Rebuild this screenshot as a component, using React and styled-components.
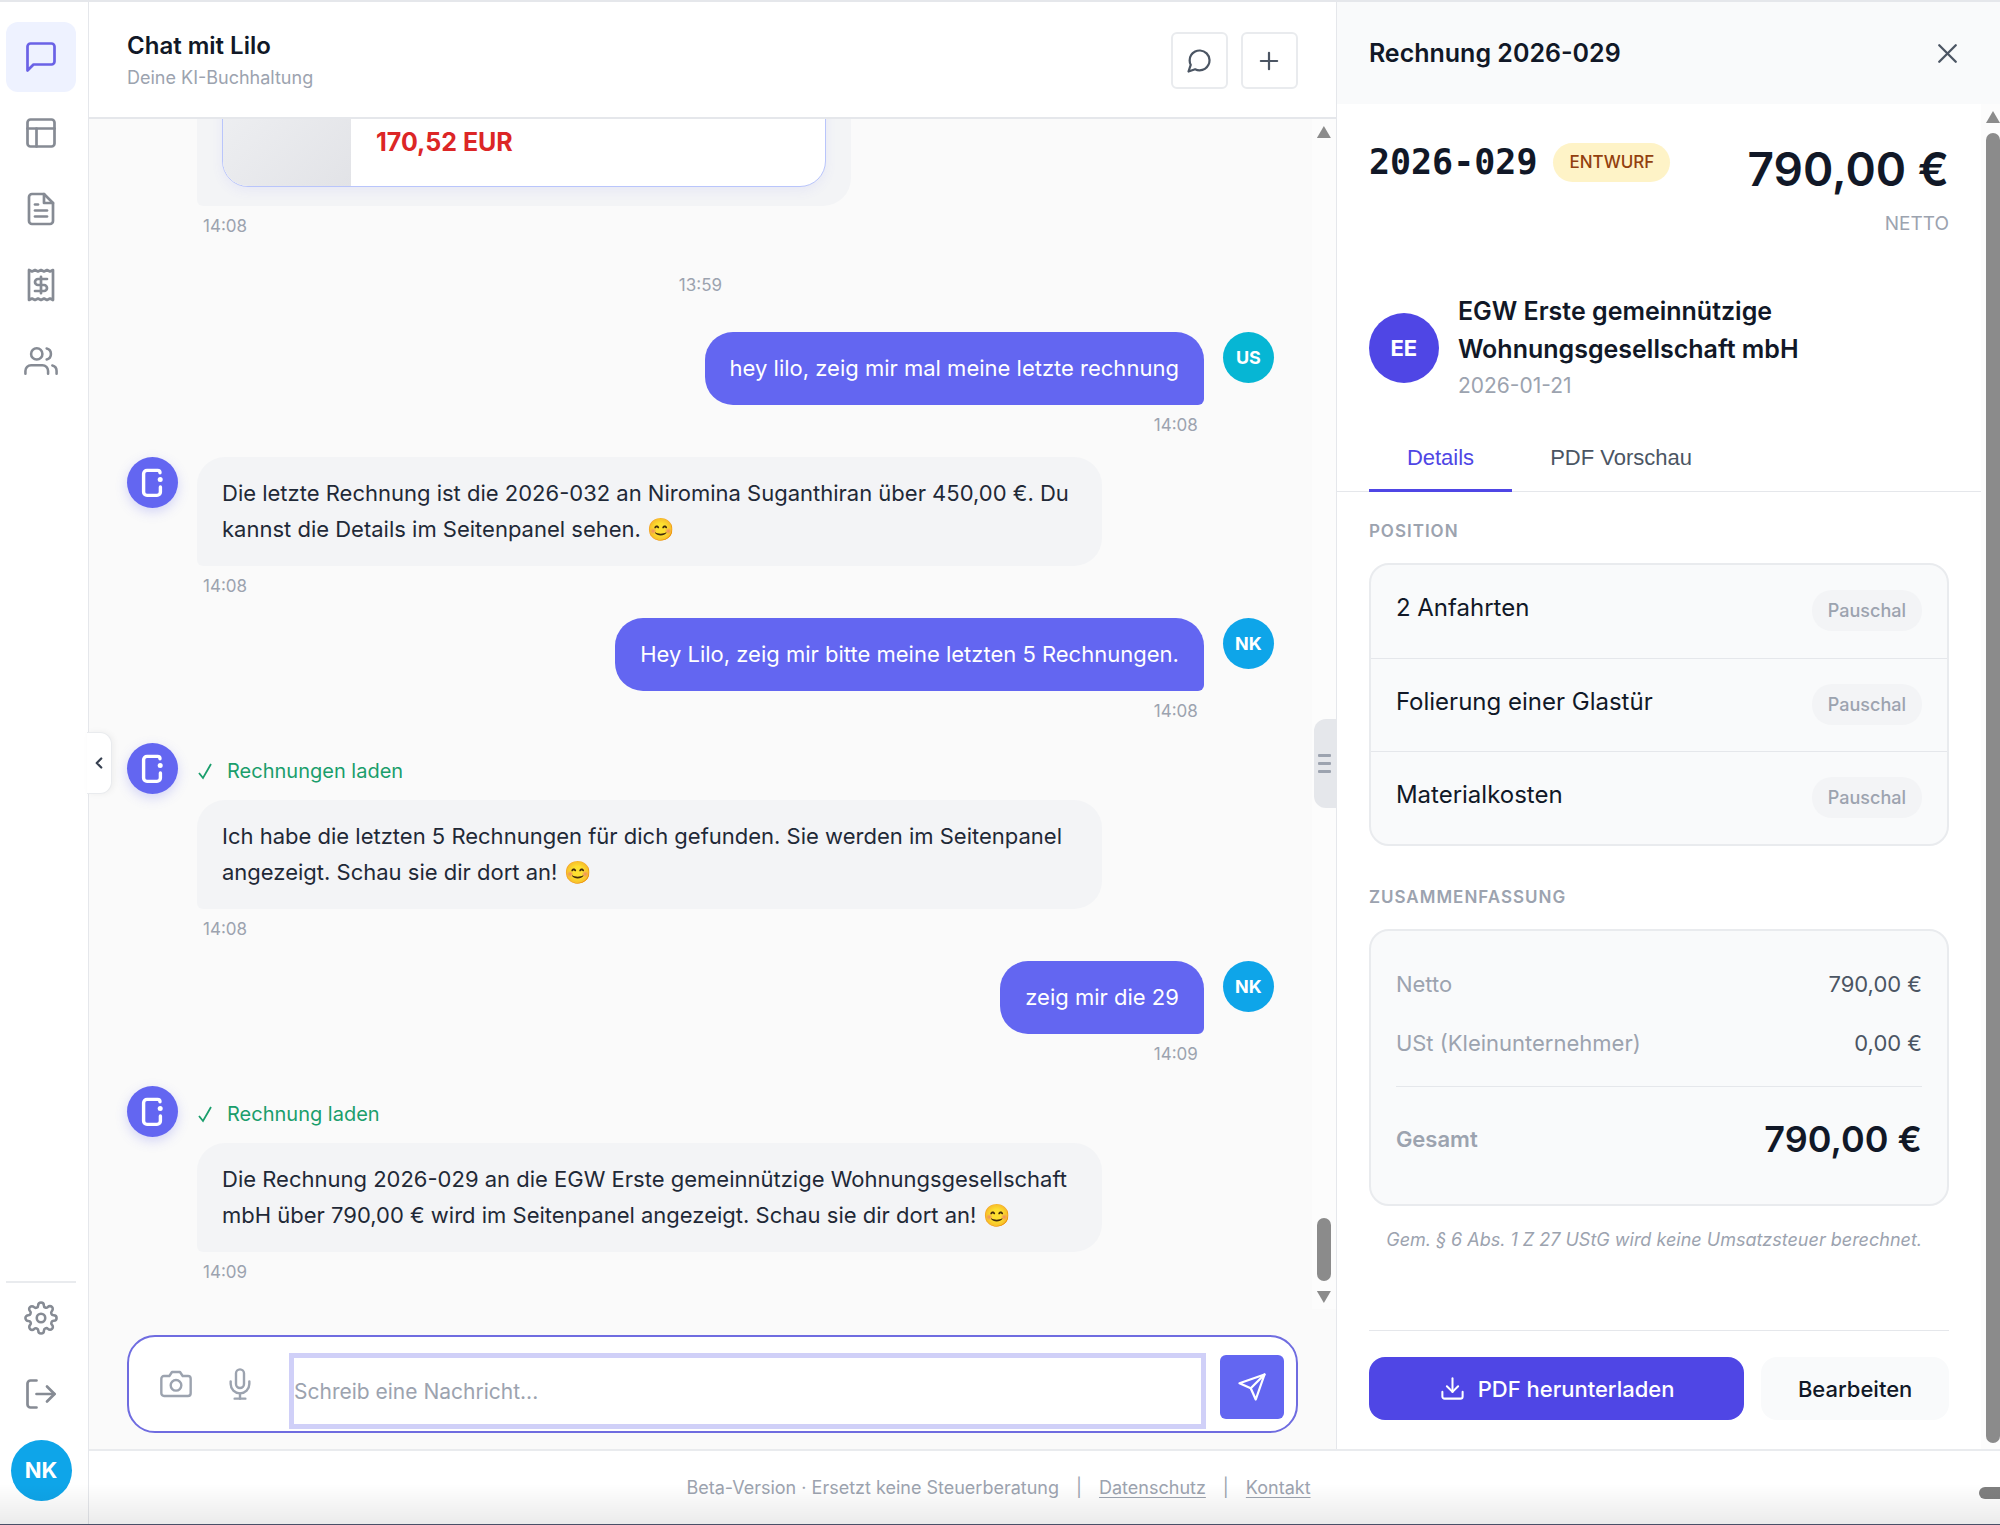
import React from 'react';
import styled, { createGlobalStyle, css } from 'styled-components';
import {
    FiCamera,
    FiChevronLeft,
    FiDownload,
    FiFileText,
    FiLayout,
    FiLogOut,
    FiMessageCircle,
    FiMessageSquare,
    FiMic,
    FiPlus,
    FiSend,
    FiSettings,
    FiUsers,
    FiX,
} from 'react-icons/fi';

const GlobalStyle = createGlobalStyle`
    *, *::before, *::after {
        box-sizing: border-box;
    }

    body {
        margin: 0;
        background: #ffffff;
        color: #111827;
        font-family: Inter, "Liberation Sans", sans-serif;
        font-size: 22px;
        line-height: 36px;
    }

    button, textarea {
        font: inherit;
        color: inherit;
    }

    button {
        padding: 0;
        border: 0;
        background: none;
        cursor: pointer;
    }

    h1, h2, h3, p, ul, dl, dd {
        margin: 0;
        padding: 0;
    }

    svg {
        display: block;
        flex: none;
    }
`

const Shell = styled.div`
    position: relative;
    display: flex;
    height: 100vh;
    border-top: 2px solid #e5e7eb;
    border-bottom: 1px solid #4a5068;

    &::after {
        content: '';
        position: absolute;
        left: 0;
        right: 0;
        bottom: 0;
        height: 40px;
        background: linear-gradient(rgba(0, 0, 0, 0), rgba(0, 0, 0, 0.08));
        pointer-events: none;
    }
`

/* ---------- sidebar ---------- */

const Sidebar = styled.nav`
    position: relative;
    display: flex;
    flex-direction: column;
    justify-content: space-between;
    flex: none;
    width: 89px;
    padding: 20px 12px 19px 6px;
    border-right: 1px solid #e5e7eb;
    background: #ffffff;
`

const NavGroup = styled.div`
    display: flex;
    flex-direction: column;
    align-items: center;
    gap: 6px;

    ${({ $divided }) => $divided && css`
        border-top: 2px solid #e9ebee;
    `}
`

const NavButton = styled.button`
    display: flex;
    align-items: center;
    justify-content: center;
    width: 70px;
    height: 70px;
    border-radius: 12px;
    color: ${({ $active }) => ($active ? '#6a62e6' : '#868b94')};
    background: ${({ $active }) => ($active ? '#eef2ff' : 'transparent')};
`

const CollapseTab = styled.button`
    position: absolute;
    top: 730px;
    left: 87px;
    z-index: 2;
    display: flex;
    align-items: center;
    justify-content: center;
    width: 25px;
    height: 62px;
    border: 1px solid #e9ebee;
    border-left: 0;
    border-radius: 0 12px 12px 0;
    background: #ffffff;
    color: #374151;
    box-shadow: 2px 0 6px rgba(0, 0, 0, 0.05);
`

const Avatar = styled.div`
    display: flex;
    align-items: center;
    justify-content: center;
    flex: none;
    width: ${({ $size }) => $size}px;
    height: ${({ $size }) => $size}px;
    border-radius: 50%;
    background: ${({ $color }) => $color};
    color: #ffffff;
    font-size: ${({ $size }) => ($size > 55 ? 22 : 18)}px;
    font-weight: 700;
`

/* ---------- page frame ---------- */

const Main = styled.div`
    display: flex;
    flex-direction: column;
    flex: 1;
    min-width: 0;
`

const Columns = styled.div`
    display: grid;
    grid-template-columns: minmax(0, 653fr) minmax(0, 347fr);
    grid-template-rows: minmax(0, 1fr);
    flex: 1;
    min-height: 0;
`

const Footer = styled.footer`
    position: relative;
    display: flex;
    align-items: center;
    justify-content: center;
    gap: 17px;
    flex: none;
    height: 75px;
    padding-right: 92px;
    border-top: 2px solid #e9ebee;
    color: #9ca3af;
    font-size: 18px;

    a {
        color: inherit;
        text-underline-offset: 3px;
    }
`

const FooterScroll = styled.div`
    position: absolute;
    right: 0;
    top: 36px;
    width: 21px;
    height: 12px;
    border-radius: 6px 0 0 6px;
    background: #7f7f7f;
`

/* ---------- scrollbar ---------- */

const Track = styled.div`
    display: flex;
    flex-direction: column;
    align-items: ${({ $wide }) => ($wide ? 'center' : 'flex-end')};
    justify-content: space-between;
    flex: none;
    width: ${({ $wide }) => ($wide ? 24 : 19)}px;
    padding: 7px 0 6px;
    background: #fcfcfc;
`

const Arrow = styled.div`
    width: 14px;
    height: 12px;
    background: #8b8b8b;
    clip-path: ${({ $down }) => ($down ? 'polygon(0 0, 100% 0, 50% 100%)' : 'polygon(50% 0, 100% 100%, 0 100%)')};
`

const Thumb = styled.div`
    width: 14px;
    height: 63px;
    border-radius: 7px;
    background: #8b8b8b;

    ${({ $fill }) => $fill && css`
        flex: 1;
        height: auto;
        margin-top: 10px;
    `}
`

const TrackEnd = styled.div`
    display: flex;
    flex-direction: column;
    gap: 10px;
`

/* ---------- chat ---------- */

const Chat = styled.section`
    position: relative;
    display: flex;
    flex-direction: column;
    min-width: 0;
    border-right: 1px solid #e5e7eb;
    background: #fafafa;
`

const ChatHeader = styled.header`
    display: flex;
    align-items: center;
    justify-content: space-between;
    flex: none;
    height: 117px;
    padding: 2px 38px 0;
    border-bottom: 2px solid #e5e7eb;
    background: #ffffff;
`

const ChatTitle = styled.h1`
    padding-top: 2px;
    font-size: 24px;
    font-weight: 600;
    line-height: 32px;
`

const ChatSubtitle = styled.p`
    color: #9ca3af;
    font-size: 18px;
    line-height: 32px;
`

const HeaderActions = styled.div`
    display: flex;
    gap: 13px;
`

const SquareButton = styled.button`
    display: flex;
    align-items: center;
    justify-content: center;
    width: 57px;
    height: 57px;
    border: 2px solid #e9ebee;
    border-radius: 6px;
    background: #ffffff;
    color: #4b5563;
`

const Scroller = styled.div`
    display: flex;
    flex: 1;
    min-height: 0;
`

const Messages = styled.div`
    display: flex;
    flex-direction: column;
    justify-content: flex-end;
    flex: 1;
    min-width: 0;
    padding: 0 38px 5px;
    overflow: hidden;
`

const Row = styled.div`
    display: flex;
    flex: none;
    gap: 19px;
    flex-direction: ${({ $own }) => ($own ? 'row-reverse' : 'row')};
`

const RowBody = styled.div`
    display: flex;
    flex-direction: column;
    flex: 1;
    min-width: 0;
    align-items: ${({ $own }) => ($own ? 'flex-end' : 'flex-start')};
    padding-left: ${({ $indent }) => ($indent ? 70 : 0)}px;
`

const Bubble = styled.div`
    max-width: 84%;
    padding: 18px 25px 19px;
    border-radius: 28px 28px 28px 6px;
    background: #f3f4f6;
    color: #1f2937;

    ${({ $own }) => $own && css`
        border-radius: 28px 28px 6px 28px;
        background: #6366f1;
        color: #ffffff;
    `}
`

const CardBubble = styled.div`
    width: 654px;
    max-width: 100%;
    padding: 19px 25px;
    border-radius: 28px 28px 28px 6px;
    background: #f3f4f6;
`

const ReceiptCard = styled.div`
    display: flex;
    height: 180px;
    overflow: hidden;
    border: 1px solid #b9c5fb;
    border-radius: 26px;
    background: #ffffff;
    box-shadow: 0 4px 12px rgba(99, 102, 241, 0.08);
`

const ReceiptThumb = styled.div`
    flex: none;
    width: 128px;
    background: linear-gradient(135deg, #f3f4f6, #e2e3e7);
`

const ReceiptAmount = styled.p`
    align-self: flex-end;
    padding: 0 25px 26px;
    color: #dc2626;
    font-size: 25px;
    font-weight: 700;
`

const Time = styled.time`
    margin: 7px 6px 19px;
    color: #9ca3af;
    font-size: 17px;
    line-height: 26px;
`

const TimeDivider = styled.div`
    flex: none;
    padding: 14px 0 34px;
    color: #9ca3af;
    font-size: 17px;
    line-height: 26px;
    text-align: center;
`

const BotAvatar = styled.div`
    flex: none;
    width: 51px;
    height: 51px;
    border-radius: 50%;
    background: #6366f1;
    box-shadow: 0 4px 12px rgba(99, 102, 241, 0.25);
`

const ToolLine = styled.p`
    display: flex;
    align-items: center;
    gap: 14px;
    padding: 10px 0 11px;
    color: #1a9e6c;
    font-size: 20px;
`

const Composer = styled.form`
    display: flex;
    align-items: flex-start;
    flex: none;
    height: 98px;
    margin: 26px 38px 16px;
    padding: 16px 12px 0 15px;
    border: 2px solid #6f6ce0;
    border-radius: 28px;
    background: #ffffff;
`

const ToolButton = styled.button`
    display: flex;
    align-items: center;
    justify-content: center;
    width: 64px;
    height: 62px;
    color: #9ca3af;
`

const MessageInput = styled.textarea`
    flex: 1;
    min-width: 0;
    height: 76px;
    margin: 0 14px 0 17px;
    padding: 16px 0;
    border: 5px solid #d0d0f8;
    outline: 0;
    background: #ffffff;
    font-size: 21px;
    resize: none;
    overflow: hidden;

    &::placeholder {
        color: #9ca3af;
        opacity: 1;
    }
`

const SendButton = styled.button`
    display: flex;
    align-items: center;
    justify-content: center;
    width: 64px;
    height: 64px;
    margin-top: 2px;
    border-radius: 6px;
    background: #6366f1;
    color: #ffffff;
`

const ResizeHandle = styled.div`
    position: absolute;
    right: 0;
    top: 717px;
    display: flex;
    flex-direction: column;
    align-items: center;
    justify-content: center;
    gap: 5px;
    width: 22px;
    height: 89px;
    border-radius: 12px 0 0 12px;
    background: #e5e7eb;

    span {
        width: 13px;
        height: 3px;
        border-radius: 1px;
        background: #9ca3af;
    }
`

/* ---------- invoice panel ---------- */

const Panel = styled.aside`
    display: flex;
    flex-direction: column;
    min-width: 0;
    background: #ffffff;
`

const PanelHeader = styled.header`
    display: flex;
    align-items: center;
    justify-content: space-between;
    flex: none;
    height: 102px;
    padding: 0 36px 0 32px;
    background: #f9fafb;
`

const PanelTitle = styled.h2`
    font-size: 25px;
    font-weight: 600;
`

const CloseButton = styled.button`
    color: #4b5563;
`

const PanelContent = styled.div`
    display: flex;
    flex-direction: column;
    flex: 1;
    min-width: 0;
`

const InvoiceTop = styled.div`
    display: flex;
    align-items: flex-start;
    justify-content: space-between;
    padding: 39px 32px 0;
`

const InvoiceId = styled.div`
    display: flex;
    align-items: center;
    gap: 16px;
    font-family: "DejaVu Sans Mono", "Liberation Mono", monospace;
    font-size: 35px;
    font-weight: 700;
    line-height: 39px;
`

const Badge = styled.span`
    padding: 0 16px;
    border-radius: 20px;
    background: #fef3c7;
    color: #92400e;
    font-family: Inter, sans-serif;
    font-size: 17px;
    font-weight: 500;
`

const Total = styled.div`
    color: #9ca3af;
    font-size: 19px;
    line-height: 30px;
    text-align: right;

    strong {
        display: block;
        margin-bottom: 13px;
        color: #111827;
        font-size: 46px;
        line-height: 53px;
        font-weight: 600;
    }
`

const Customer = styled.div`
    display: flex;
    align-items: center;
    gap: 19px;
    padding: 53px 32px 0;
`

const CustomerName = styled.h3`
    max-width: 400px;
    font-size: 25px;
    line-height: 38px;
    font-weight: 600;
`

const CustomerDate = styled.p`
    color: #9ca3af;
    font-size: 21px;
    line-height: 36px;
`

const Tabs = styled.div`
    display: flex;
    margin-top: 22px;
    padding-left: 32px;
    border-bottom: 1px solid #e5e7eb;
`

const Tab = styled.button`
    height: 66px;
    margin-bottom: -1px;
    padding: 0 38px;
    border-bottom: 3px solid ${({ $active }) => ($active ? '#4f46e5' : 'transparent')};
    border-radius: 2px 2px 0 0;
    color: ${({ $active }) => ($active ? '#4f46e5' : '#4b5563')};
    font-family: "Liberation Sans", Arial, sans-serif;
    font-size: 22px;
`

const PanelBody = styled.div`
    display: flex;
    flex-direction: column;
    flex: 1;
    padding: 25px 32px 29px;
`

const SectionLabel = styled.h3`
    margin-bottom: 18px;
    color: #9ca3af;
    font-size: 17px;
    line-height: 28px;
    font-weight: 600;
    letter-spacing: 1px;
`

const PositionList = styled.ul`
    margin-bottom: 37px;
    border: 2px solid #e9ebee;
    border-radius: 20px;
    background: #f9fafb;
    list-style: none;
`

const Position = styled.li`
    display: flex;
    align-items: flex-start;
    justify-content: space-between;
    height: 93px;
    padding: 25px 25px 0;
    font-size: 24px;

    & + & {
        border-top: 1px solid #e5e7eb;
    }
`

const Pill = styled.span`
    padding: 0 16px;
    border-radius: 20px;
    background: #f3f4f6;
    color: #9ca3af;
    font-size: 18px;
    line-height: 41px;
    font-weight: 500;
`

const Summary = styled.dl`
    padding: 23px 25px 27px;
    border: 2px solid #e9ebee;
    border-radius: 20px;
    background: #f9fafb;
`

const SummaryRow = styled.div`
    display: flex;
    align-items: center;
    justify-content: space-between;
    height: 59px;
    color: #9ca3af;

    dd {
        color: #4b5563;
    }

    ${({ $total }) => $total && css`
        height: 91px;
        margin-top: 14px;
        padding-top: 13px;
        border-top: 1px solid #e5e7eb;
        font-weight: 600;

        dd {
            color: #111827;
            font-size: 36px;
        }
    `}
`

const Note = styled.p`
    padding: 16px 27px 0 0;
    color: #9ca3af;
    font-size: 18px;
    font-style: italic;
    text-align: right;
    white-space: nowrap;
`

const Actions = styled.div`
    display: grid;
    grid-template-columns: 2fr 1fr;
    gap: 17px;
    margin-top: auto;
    padding-top: 26px;
    border-top: 1px solid #e5e7eb;
`

const ActionButton = styled.button`
    display: flex;
    align-items: center;
    justify-content: center;
    gap: 12px;
    height: 63px;
    border-radius: 16px;
    background: ${({ $primary }) => ($primary ? '#4f46e5' : '#f9fafb')};
    color: ${({ $primary }) => ($primary ? '#ffffff' : '#111827')};
    font-weight: 500;
`

const ReceiptIcon = () => (
    <svg width="36" height="36" viewBox="0 0 24 24" fill="none" stroke="currentColor" strokeWidth="1.8" strokeLinecap="round" strokeLinejoin="round">
        <path d="M4 2v20l2-1 2 1 2-1 2 1 2-1 2 1 2-1 2 1V2l-2 1-2-1-2 1-2-1-2 1-2-1-2 1Z" />
        <path d="M16 8h-6a2 2 0 1 0 0 4h4a2 2 0 1 1 0 4H8M12 17.5v-11" />
    </svg>
)

const CheckIcon = () => (
    <svg width="16" height="20" viewBox="0 0 16 20" fill="none" stroke="currentColor" strokeWidth="1.8">
        <path d="M2 12l4 5L14 3" />
    </svg>
)

const Bot = () => (
    <BotAvatar>
        <svg width="51" height="51" viewBox="0 0 51 51" fill="none" stroke="#ffffff" strokeWidth="3.4" strokeLinecap="round">
            <path d="M33 15.8a2.4 2.4 0 0 0-2.4-2.4H20a3.4 3.4 0 0 0-3.4 3.4V35a3.4 3.4 0 0 0 3.4 3.4h10a3.4 3.4 0 0 0 3.4-3.4v-5" />
            <circle cx="33.2" cy="22.6" r="2.5" fill="#ffffff" stroke="none" />
        </svg>
    </BotAvatar>
)

const navItems = [
    { label: 'Chat', icon: <FiMessageSquare size={36} strokeWidth={1.8} />, active: true },
    { label: 'Übersicht', icon: <FiLayout size={36} strokeWidth={1.8} /> },
    { label: 'Rechnungen', icon: <FiFileText size={36} strokeWidth={1.8} /> },
    { label: 'Belege', icon: <ReceiptIcon /> },
    { label: 'Kunden', icon: <FiUsers size={34} strokeWidth={1.8} /> },
]

const messages = [
    { own: true, initials: 'US', color: '#06b6d4', text: 'hey lilo, zeig mir mal meine letzte rechnung', time: '14:08' },
    { text: 'Die letzte Rechnung ist die 2026-032 an Niromina Suganthiran über 450,00 €. Du kannst die Details im Seitenpanel sehen. 😊', time: '14:08' },
    { own: true, initials: 'NK', color: '#0ea5e9', text: 'Hey Lilo, zeig mir bitte meine letzten 5 Rechnungen.', time: '14:08' },
    { tool: 'Rechnungen laden', text: 'Ich habe die letzten 5 Rechnungen für dich gefunden. Sie werden im Seitenpanel angezeigt. Schau sie dir dort an! 😊', time: '14:08' },
    { own: true, initials: 'NK', color: '#0ea5e9', text: 'zeig mir die 29', time: '14:09' },
    { tool: 'Rechnung laden', text: 'Die Rechnung 2026-029 an die EGW Erste gemeinnützige Wohnungsgesellschaft mbH über 790,00 € wird im Seitenpanel angezeigt. Schau sie dir dort an! 😊', time: '14:09' },
]

const positions = ['2 Anfahrten', 'Folierung einer Glastür', 'Materialkosten']

const Message = ({ own, initials, color, tool, text, time }) => (
    <Row $own={own}>
        {own ? <Avatar $size={51} $color={color}>{initials}</Avatar> : <Bot />}
        <RowBody $own={own}>
            {tool && <ToolLine><CheckIcon />{tool}</ToolLine>}
            <Bubble $own={own}>{text}</Bubble>
            <Time>{time}</Time>
        </RowBody>
    </Row>
)

const InvoicePanel = () => (
    <Panel>
        <PanelHeader>
            <PanelTitle>Rechnung 2026-029</PanelTitle>
            <CloseButton aria-label="Schließen"><FiX size={33} strokeWidth={1.7} /></CloseButton>
        </PanelHeader>
        <Scroller>
            <PanelContent>
                <InvoiceTop>
                    <InvoiceId>2026-029<Badge>ENTWURF</Badge></InvoiceId>
                    <Total><strong>790,00 €</strong>NETTO</Total>
                </InvoiceTop>
                <Customer>
                    <Avatar $size={70} $color="#4f46e5">EE</Avatar>
                    <div>
                        <CustomerName>EGW Erste gemeinnützige Wohnungsgesellschaft mbH</CustomerName>
                        <CustomerDate>2026-01-21</CustomerDate>
                    </div>
                </Customer>
                <Tabs role="tablist">
                    <Tab role="tab" aria-selected="true" $active>Details</Tab>
                    <Tab role="tab" aria-selected="false">PDF Vorschau</Tab>
                </Tabs>
                <PanelBody>
                    <SectionLabel>POSITION</SectionLabel>
                    <PositionList>
                        {positions.map((name) => (
                            <Position key={name}>{name}<Pill>Pauschal</Pill></Position>
                        ))}
                    </PositionList>
                    <SectionLabel>ZUSAMMENFASSUNG</SectionLabel>
                    <Summary>
                        <SummaryRow><dt>Netto</dt><dd>790,00 €</dd></SummaryRow>
                        <SummaryRow><dt>USt (Kleinunternehmer)</dt><dd>0,00 €</dd></SummaryRow>
                        <SummaryRow $total><dt>Gesamt</dt><dd>790,00 €</dd></SummaryRow>
                    </Summary>
                    <Note>Gem. § 6 Abs. 1 Z 27 UStG wird keine Umsatzsteuer berechnet.</Note>
                    <Actions>
                        <ActionButton $primary><FiDownload size={27} strokeWidth={1.8} />PDF herunterladen</ActionButton>
                        <ActionButton>Bearbeiten</ActionButton>
                    </Actions>
                </PanelBody>
            </PanelContent>
            <Track>
                <Arrow />
                <Thumb $fill />
            </Track>
        </Scroller>
    </Panel>
)

const App = () => {
    return (
        <>
            <GlobalStyle />
            <Shell>
                <Sidebar>
                    <NavGroup>
                        {navItems.map(({ label, icon, active }) => (
                            <NavButton key={label} aria-label={label} $active={active}>{icon}</NavButton>
                        ))}
                    </NavGroup>
                    <NavGroup $divided>
                        <NavButton aria-label="Einstellungen"><FiSettings size={34} strokeWidth={1.8} /></NavButton>
                        <NavButton aria-label="Abmelden"><FiLogOut size={36} strokeWidth={1.8} /></NavButton>
                        <NavButton aria-label="Profil"><Avatar $size={61} $color="#0ea5e9">NK</Avatar></NavButton>
                    </NavGroup>
                    <CollapseTab aria-label="Seitenleiste einklappen"><FiChevronLeft size={18} strokeWidth={3} /></CollapseTab>
                </Sidebar>
                <Main>
                    <Columns>
                        <Chat>
                            <ChatHeader>
                                <div>
                                    <ChatTitle>Chat mit Lilo</ChatTitle>
                                    <ChatSubtitle>Deine KI-Buchhaltung</ChatSubtitle>
                                </div>
                                <HeaderActions>
                                    <SquareButton aria-label="Unterhaltungen"><FiMessageCircle size={28} strokeWidth={1.9} /></SquareButton>
                                    <SquareButton aria-label="Neuer Chat"><FiPlus size={28} strokeWidth={1.9} /></SquareButton>
                                </HeaderActions>
                            </ChatHeader>
                            <Scroller>
                                <Messages>
                                    <Row>
                                        <RowBody $indent>
                                            <CardBubble>
                                                <ReceiptCard>
                                                    <ReceiptThumb />
                                                    <ReceiptAmount>170,52 EUR</ReceiptAmount>
                                                </ReceiptCard>
                                            </CardBubble>
                                            <Time>14:08</Time>
                                        </RowBody>
                                    </Row>
                                    <TimeDivider>13:59</TimeDivider>
                                    {messages.map((message, index) => (
                                        <Message key={index} {...message} />
                                    ))}
                                </Messages>
                                <Track $wide>
                                    <Arrow />
                                    <TrackEnd>
                                        <Thumb />
                                        <Arrow $down />
                                    </TrackEnd>
                                </Track>
                            </Scroller>
                            <Composer onSubmit={(event) => event.preventDefault()}>
                                <ToolButton type="button" aria-label="Foto aufnehmen"><FiCamera size={32} strokeWidth={1.8} /></ToolButton>
                                <ToolButton type="button" aria-label="Sprachnachricht"><FiMic size={32} strokeWidth={1.8} /></ToolButton>
                                <MessageInput aria-label="Nachricht" placeholder="Schreib eine Nachricht..." rows={1} />
                                <SendButton type="submit" aria-label="Senden"><FiSend size={30} strokeWidth={1.8} /></SendButton>
                            </Composer>
                            <ResizeHandle><span /><span /><span /></ResizeHandle>
                        </Chat>
                        <InvoicePanel />
                    </Columns>
                    <Footer>
                        <span>Beta-Version · Ersetzt keine Steuerberatung</span>
                        <span>|</span>
                        <a href="#datenschutz">Datenschutz</a>
                        <span>|</span>
                        <a href="#kontakt">Kontakt</a>
                        <FooterScroll />
                    </Footer>
                </Main>
            </Shell>
        </>
    )
}
export default App;
